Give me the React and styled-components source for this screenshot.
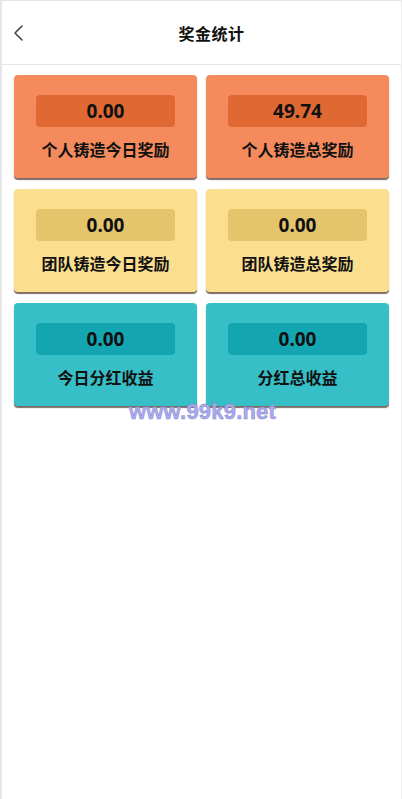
import React from "react";
import styled, { createGlobalStyle } from "styled-components";

const GlobalStyle = createGlobalStyle`
  html, body {
    margin: 0;
    padding: 0;
    background: #fff;
  }
  body {
    font-family: "Noto Sans CJK SC", "Liberation Sans", sans-serif;
  }
`;

const Page = styled.div`
  position: relative;
  box-sizing: border-box;
  width: 402px;
  min-height: 799px;
  border-top: 1px solid #e4e4e4;
  border-left: 2px solid #e6e6e6;
  border-right: 1px solid #ececec;
  background: #fff;
`;

const Header = styled.header`
  position: relative;
  height: 63px;
  display: flex;
  align-items: center;
  justify-content: center;
  padding-left: 20px;
  border-bottom: 1px solid #e6e6e6;
`;

const Back = styled.button`
  position: absolute;
  left: 8px;
  top: 20px;
  width: 16px;
  height: 24px;
  padding: 0;
  border: none;
  background: none;
  display: flex;
  align-items: center;
  justify-content: center;
`;

const Title = styled.h1`
  margin: 0;
  font-size: 16px;
  font-weight: 700;
  color: #111;
  letter-spacing: 0.5px;
`;

const Grid = styled.div`
  display: grid;
  grid-template-columns: 183px 183px;
  column-gap: 9px;
  row-gap: 11px;
  padding: 10px 0 0 12px;
`;

const palette = {
  orange: { bg: "#f58b5d", inner: "#e06833" },
  yellow: { bg: "#fbdf8f", inner: "#e5c56c" },
  teal: { bg: "#37bfc7", inner: "#14a6b0" },
};

const Card = styled.div`
  height: 103px;
  box-sizing: border-box;
  padding: 20px 22px 0;
  border-radius: 4px;
  background: ${(p) => palette[p.$tone].bg};
  box-shadow: 0 2px 1px rgba(80, 60, 50, 0.75);
  display: flex;
  flex-direction: column;
  align-items: center;
`;

const Value = styled.div`
  width: 139px;
  height: 32px;
  border-radius: 4px;
  background: ${(p) => palette[p.$tone].inner};
  display: flex;
  align-items: center;
  justify-content: center;
  font-family: "Noto Sans", "Liberation Sans", sans-serif;
  font-size: 19px;
  font-weight: 700;
  color: #111;
`;

const Label = styled.div`
  margin-top: 10px;
  font-size: 16px;
  font-weight: 700;
  color: #111;
`;

const Watermark = styled.div`
  position: absolute;
  left: 127px;
  top: 398px;
  font-family: "Liberation Sans", Arial, sans-serif;
  font-size: 22px;
  font-weight: 700;
  color: #ababea;
  -webkit-text-stroke: 0.5px #8888d4;
  letter-spacing: 0.2px;
  pointer-events: none;
`;

const items = [
  { tone: "orange", value: "0.00", label: "个人铸造今日奖励" },
  { tone: "orange", value: "49.74", label: "个人铸造总奖励" },
  { tone: "yellow", value: "0.00", label: "团队铸造今日奖励" },
  { tone: "yellow", value: "0.00", label: "团队铸造总奖励" },
  { tone: "teal", value: "0.00", label: "今日分红收益" },
  { tone: "teal", value: "0.00", label: "分红总收益" },
];

export default function App() {
  return (
    <>
      <GlobalStyle />
      <Page>
        <Header>
          <Back aria-label="back">
            <svg width="12" height="18" viewBox="0 0 12 18">
              <path
                d="M10 2 L3 9 L10 16"
                fill="none"
                stroke="#444"
                strokeWidth="1.6"
                strokeLinecap="round"
                strokeLinejoin="round"
              />
            </svg>
          </Back>
          <Title>奖金统计</Title>
        </Header>
        <Grid>
          {items.map((it, i) => (
            <Card key={i} $tone={it.tone}>
              <Value $tone={it.tone}>{it.value}</Value>
              <Label>{it.label}</Label>
            </Card>
          ))}
        </Grid>
        <Watermark>www.99k9.net</Watermark>
      </Page>
    </>
  );
}
